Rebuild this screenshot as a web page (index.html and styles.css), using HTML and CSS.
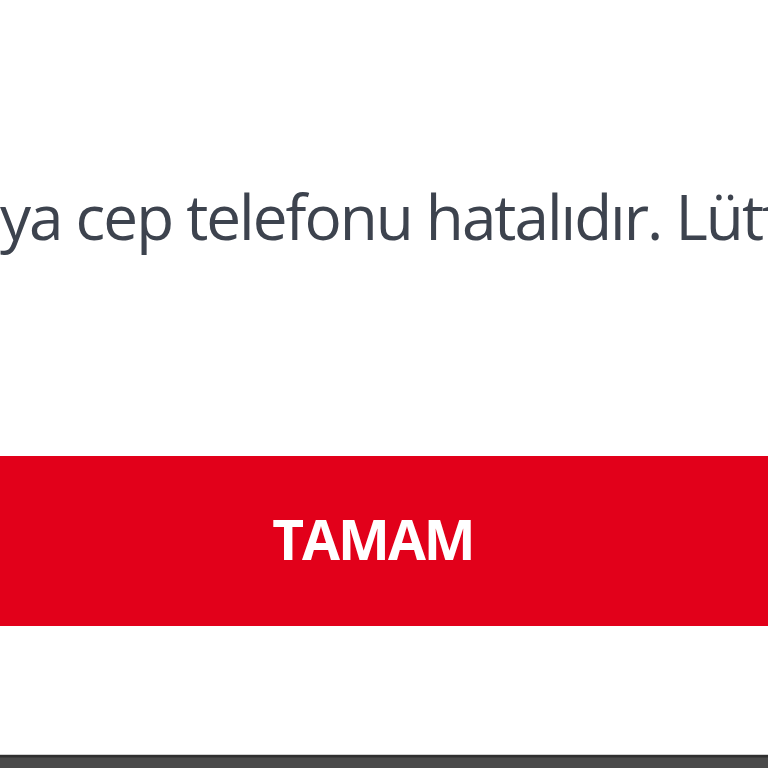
FILE: index.html
```html
<!DOCTYPE html>
<html lang="tr">
<head>
<meta charset="utf-8">
<link rel="stylesheet" href="styles.css">
</head>
<body>
<div class="page">
  <div class="dialog">
    <p class="message">ya cep telefonu hatalıdır. Lütfen tekrar deneyiniz.</p>
    <button class="ok-button">TAMAM</button>
  </div>
  <div class="taskbar"></div>
</div>
</body>
</html>
```
FILE: styles.css
```css
html, body {
  margin: 0;
  padding: 0;
  background: #ffffff;
}
.page {
  width: 768px;
  height: 768px;
  overflow: hidden;
  display: flex;
  flex-direction: column;
}
.dialog {
  flex: 1;
  display: flex;
  flex-direction: column;
}
.message {
  margin: 0;
  padding-top: 176px;
  font-family: "Open Sans", sans-serif;
  font-size: 62px;
  line-height: 80px;
  letter-spacing: -2px;
  color: #3d434e;
  white-space: nowrap;
}
.ok-button {
  margin-top: 200px;
  height: 170px;
  width: 100%;
  border: none;
  background: #e2001a;
  color: #ffffff;
  font-family: "Open Sans", sans-serif;
  font-weight: 700;
  font-size: 55px;
  letter-spacing: -2px;
  padding: 0 22px 6px 0;
}
.taskbar {
  height: 13px;
  border-top: 1px solid #d0d0d0;
  background: linear-gradient(#2f2f2f 0, #2f2f2f 2px, #4a4a4a 3px, #4a4a4a 100%);
}
```
